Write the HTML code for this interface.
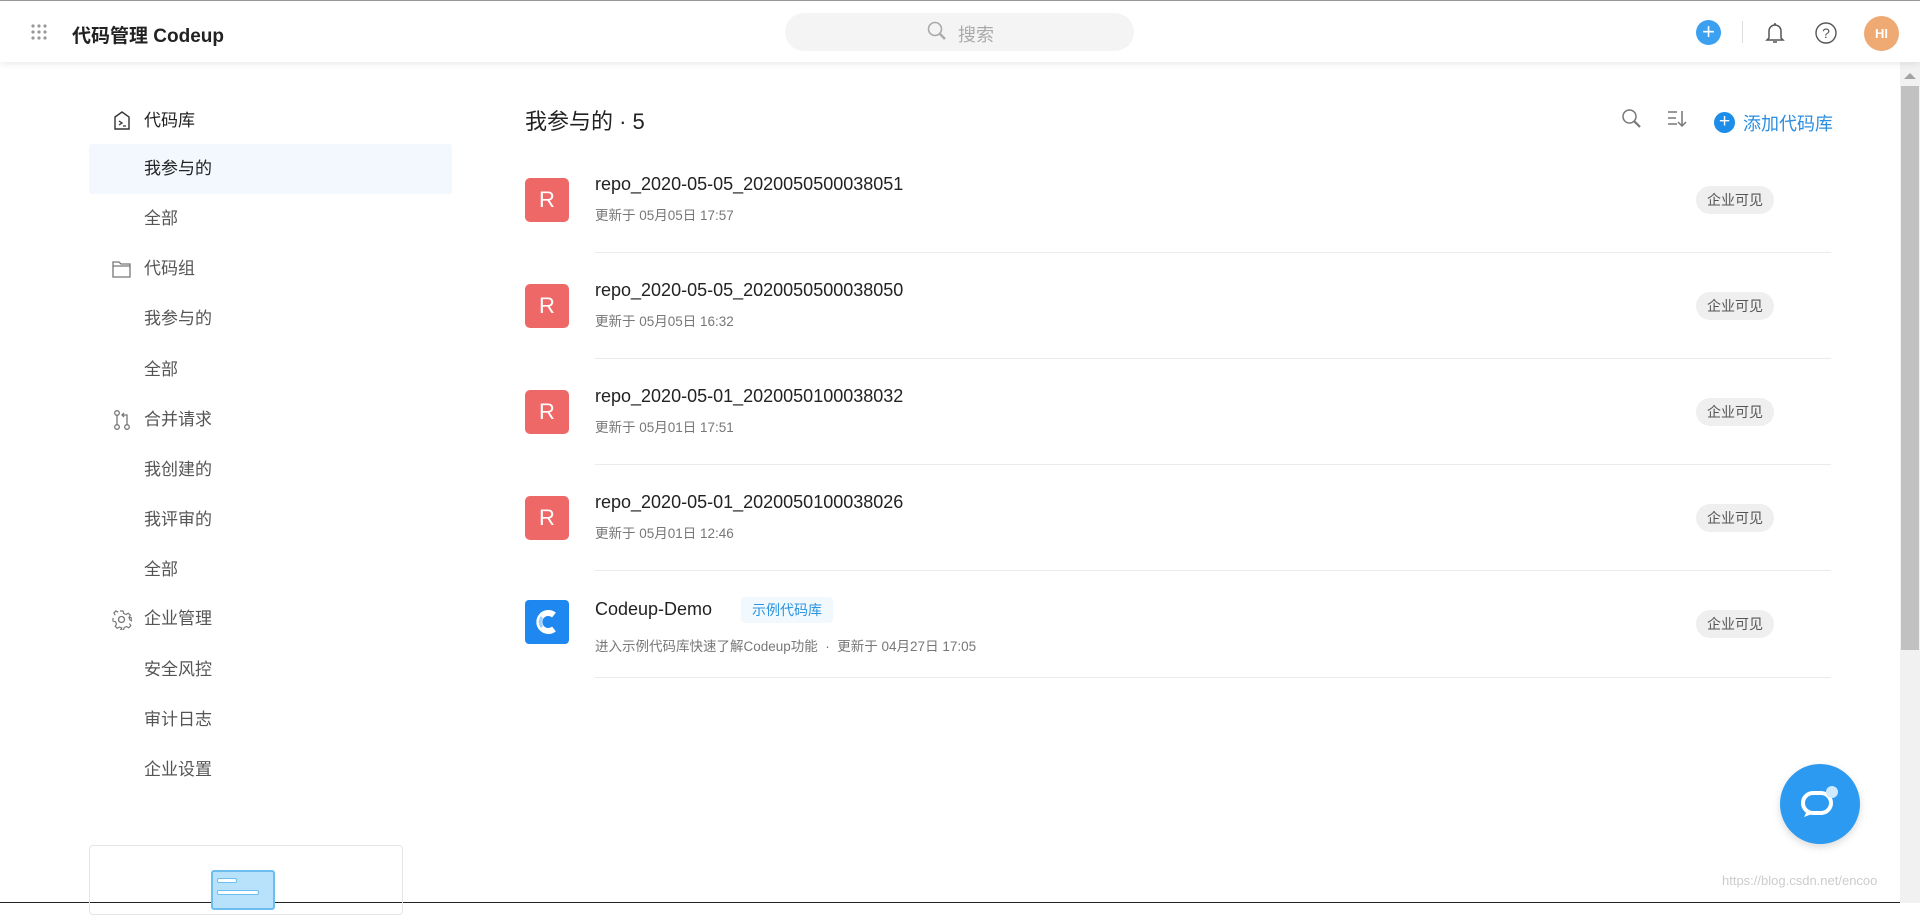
<!DOCTYPE html>
<html><head><meta charset="utf-8"><style>
*{margin:0;padding:0;box-sizing:border-box}
body{width:1920px;height:903px;overflow:hidden;background:#fff;font-family:"Liberation Sans","Noto Sans CJK SC",sans-serif;position:relative;color:#333;border-top:1px solid #999;border-bottom:1px solid #222}
.abs{position:absolute}
.hdr{left:0;top:1px;width:1920px;height:60px;background:#fff;box-shadow:0 2px 6px rgba(0,0,0,.08);z-index:2}
.side{font-size:17px;color:#555}
.side div{position:absolute;left:144px;line-height:20px}
.row .name{position:absolute;left:595px;font-size:18px;color:#222}
.row .sub{position:absolute;left:595px;font-size:13.5px;color:#777}
.icoR{position:absolute;left:525px;width:44px;height:44px;border-radius:5px;background:#ef6868;color:#fff;font-size:22px;text-align:center;line-height:44px}
.badge{position:absolute;left:1696px;width:78px;height:28px;border-radius:14px;background:#efefef;color:#555;font-size:14px;text-align:center;line-height:28px}
.line{position:absolute;left:595px;width:1236px;height:1px;background:#ebebeb}
</style></head><body>
<div class="abs hdr">
 <svg class="abs" style="left:30px;top:21px" width="18" height="18"><g fill="#999"><circle cx="3" cy="3" r="1.6"/><circle cx="9" cy="3" r="1.6"/><circle cx="15" cy="3" r="1.6"/><circle cx="3" cy="9" r="1.6"/><circle cx="9" cy="9" r="1.6"/><circle cx="15" cy="9" r="1.6"/><circle cx="3" cy="15" r="1.6"/><circle cx="9" cy="15" r="1.6"/><circle cx="15" cy="15" r="1.6"/></g></svg>
 <div class="abs" style="left:72px;top:19px;font-size:19px;font-weight:bold;color:#222">代码管理 Codeup</div>
 <div class="abs" style="left:785px;top:11px;width:349px;height:38px;border-radius:19px;background:#f4f4f4"></div>
 <svg class="abs" style="left:926px;top:18px" width="22" height="22"><circle cx="9" cy="9" r="6.5" fill="none" stroke="#aaa" stroke-width="1.6"/><path d="M14 14l5 5" stroke="#aaa" stroke-width="2.4"/></svg>
 <div class="abs" style="left:958px;top:19px;font-size:18px;color:#aaa">搜索</div>
 <div class="abs" style="left:1696px;top:18px;width:25px;height:25px;border-radius:50%;background:#3ba0f0;color:#fff;text-align:center;line-height:24px;font-size:22px">+</div>
 <div class="abs" style="left:1742px;top:19px;width:1px;height:22px;background:#ddd"></div>
 <svg class="abs" style="left:1764px;top:19px" width="22" height="24"><path d="M5 17V10a6 6 0 0 1 12 0v7l2 2H3z" fill="none" stroke="#555" stroke-width="1.5"/><path d="M9 21h4" stroke="#555" stroke-width="1.5"/><circle cx="11" cy="3" r="1" fill="#555"/></svg>
 <svg class="abs" style="left:1814px;top:19px" width="24" height="24"><circle cx="12" cy="12" r="10" fill="none" stroke="#555" stroke-width="1.4"/><text x="12" y="17" font-size="14" text-anchor="middle" fill="#555" font-family="Liberation Sans">?</text></svg>
 <div class="abs" style="left:1864px;top:14px;width:35px;height:35px;border-radius:50%;background:#eeaa72;color:#fff;text-align:center;line-height:35px;font-size:13px;font-weight:bold">HI</div>
</div>
<div class="abs" style="left:1900px;top:61px;width:20px;height:841px;background:#f1f1f1"></div>
<div class="abs" style="left:1904px;top:72px;width:0;height:0;border-left:6px solid transparent;border-right:6px solid transparent;border-bottom:6px solid #a3a3a3"></div>
<div class="abs" style="left:1901px;top:85px;width:18px;height:564px;background:#c1c1c1"></div>
<div class="abs" style="left:89px;top:143px;width:363px;height:50px;background:#f2f8fe;border-radius:3px"></div>
<div class="side">
 <svg class="abs" style="left:112px;top:109px" width="20" height="22"><path d="M3 7l7-5 7 5v12H3z" fill="none" stroke="#333" stroke-width="1.4"/><path d="M7 11l3 2-3 2M11 16h3" fill="none" stroke="#333" stroke-width="1.3"/></svg>
 <div style="top:110px;color:#222">代码库</div>
 <div style="top:158px;color:#222">我参与的</div>
 <div style="top:208px">全部</div>
 <svg class="abs" style="left:111px;top:258px" width="22" height="20"><path d="M2 3h6l2 2h9v13H2z M2 7h17" fill="none" stroke="#777" stroke-width="1.3"/></svg>
 <div style="top:258px">代码组</div>
 <div style="top:308px">我参与的</div>
 <div style="top:359px">全部</div>
 <svg class="abs" style="left:112px;top:408px" width="20" height="22"><circle cx="5" cy="4" r="2.3" fill="none" stroke="#777" stroke-width="1.3"/><circle cx="5" cy="18" r="2.3" fill="none" stroke="#777" stroke-width="1.3"/><circle cx="15" cy="18" r="2.3" fill="none" stroke="#777" stroke-width="1.3"/><path d="M5 6v10M15 16V6h-5M12 4l-2 2 2 2" fill="none" stroke="#777" stroke-width="1.3"/></svg>
 <div style="top:409px">合并请求</div>
 <div style="top:459px">我创建的</div>
 <div style="top:509px">我评审的</div>
 <div style="top:559px">全部</div>
 <svg class="abs" style="left:111px;top:608px" width="21" height="21"><circle cx="10.5" cy="10.5" r="3" fill="none" stroke="#777" stroke-width="1.3"/><path d="M9 2h3l.7 2.5 2.3 1 2.3-1.3 2 2-1.3 2.3 1 2.3L21 12v-3l-2.5-.7M2 9v3l2.5.7 1 2.3-1.3 2.3 2 2 2.3-1.3 2.3 1L9.5 21h3l.7-2.5 2.3-1 2.3 1.3 2-2-1.3-2.3M4.2 6.2l-1.3-2.3 2-2 2.3 1.3" fill="none" stroke="#777" stroke-width="1.2"/></svg>
 <div style="top:608px">企业管理</div>
 <div style="top:659px">安全风控</div>
 <div style="top:709px">审计日志</div>
 <div style="top:759px">企业设置</div>
</div>
<div class="abs" style="left:89px;top:844px;width:314px;height:70px;border:1px solid #e6e6e6;border-radius:4px"></div>
<div class="abs" style="left:211px;top:869px;width:64px;height:40px;background:#b8e2fb;border:2px solid #6cbdf0;border-radius:3px"></div>
<div class="abs" style="left:217px;top:877px;width:20px;height:5px;border:1.5px solid #6cbdf0;border-radius:2px;background:#fff"></div>
<div class="abs" style="left:217px;top:889px;width:42px;height:5px;border:1.5px solid #6cbdf0;border-radius:2px;background:#fff"></div>
<div class="abs" style="left:525px;top:103px;font-size:22px;color:#222">我参与的 · 5</div>
<svg class="abs" style="left:1621px;top:107px" width="22" height="22"><circle cx="8.5" cy="8.5" r="6.5" fill="none" stroke="#777" stroke-width="1.5"/><path d="M13 13l6 6" stroke="#777" stroke-width="2.2"/></svg>
<svg class="abs" style="left:1667px;top:108px" width="22" height="20"><path d="M1 3h9M1 9h8M1 15h9M15 2v15M11 13l4 4 4-4" fill="none" stroke="#777" stroke-width="1.5"/></svg>
<div class="abs" style="left:1714px;top:111px;width:21px;height:21px;border-radius:50%;background:#1c8de8;color:#fff;text-align:center;line-height:20px;font-size:19px">+</div>
<div class="abs" style="left:1743px;top:109px;font-size:18px;color:#2b8ee0">添加代码库</div>

<div class="row">
 <div class="icoR" style="top:177px">R</div><div class="name" style="top:173px">repo_2020-05-05_2020050500038051</div><div class="sub" style="top:203px">更新于 05月05日 17:57</div><div class="badge" style="top:185px">企业可见</div><div class="line" style="top:251px"></div>
 <div class="icoR" style="top:283px">R</div><div class="name" style="top:279px">repo_2020-05-05_2020050500038050</div><div class="sub" style="top:309px">更新于 05月05日 16:32</div><div class="badge" style="top:291px">企业可见</div><div class="line" style="top:357px"></div>
 <div class="icoR" style="top:389px">R</div><div class="name" style="top:385px">repo_2020-05-01_2020050100038032</div><div class="sub" style="top:415px">更新于 05月01日 17:51</div><div class="badge" style="top:397px">企业可见</div><div class="line" style="top:463px"></div>
 <div class="icoR" style="top:495px">R</div><div class="name" style="top:491px">repo_2020-05-01_2020050100038026</div><div class="sub" style="top:521px">更新于 05月01日 12:46</div><div class="badge" style="top:503px">企业可见</div><div class="line" style="top:569px"></div>
 <div class="abs" style="left:525px;top:599px;width:44px;height:44px;border-radius:4px;background:#1e88f0"></div>
 <svg class="abs" style="left:525px;top:599px" width="44" height="44"><path d="M29 15a9 9 0 1 0 0 14" fill="none" stroke="#fff" stroke-width="6"/><path d="M17 17a8 8 0 0 0 0 10" fill="none" stroke="#9fd0fa" stroke-width="3"/></svg>
 <div class="name" style="top:598px">Codeup-Demo</div>
 <div class="abs" style="left:741px;top:596px;width:92px;height:26px;border-radius:4px;background:#f1f9fe;color:#2b93e0;font-size:14px;text-align:center;line-height:26px">示例代码库</div>
 <div class="sub" style="top:634px">进入示例代码库快速了解Codeup功能 &nbsp;· &nbsp;更新于 04月27日 17:05</div>
 <div class="badge" style="top:609px">企业可见</div><div class="line" style="top:676px"></div>
</div>
<div class="abs" style="left:1780px;top:763px;width:80px;height:80px;border-radius:50%;background:#2b9af0;box-shadow:0 3px 8px rgba(0,0,0,.15)"></div>
<svg class="abs" style="left:1796px;top:779px" width="48" height="48"><rect x="7" y="13" width="28" height="20" rx="10" fill="none" stroke="#fff" stroke-width="4"/><path d="M11 31l-3 6 8-3" fill="#fff"/><circle cx="36" cy="12" r="6" fill="#cfe9ff"/></svg>
<div class="abs" style="left:1722px;top:872px;font-size:13px;color:#ccc">https://blog.csdn.net/encoo</div>
</body></html>
